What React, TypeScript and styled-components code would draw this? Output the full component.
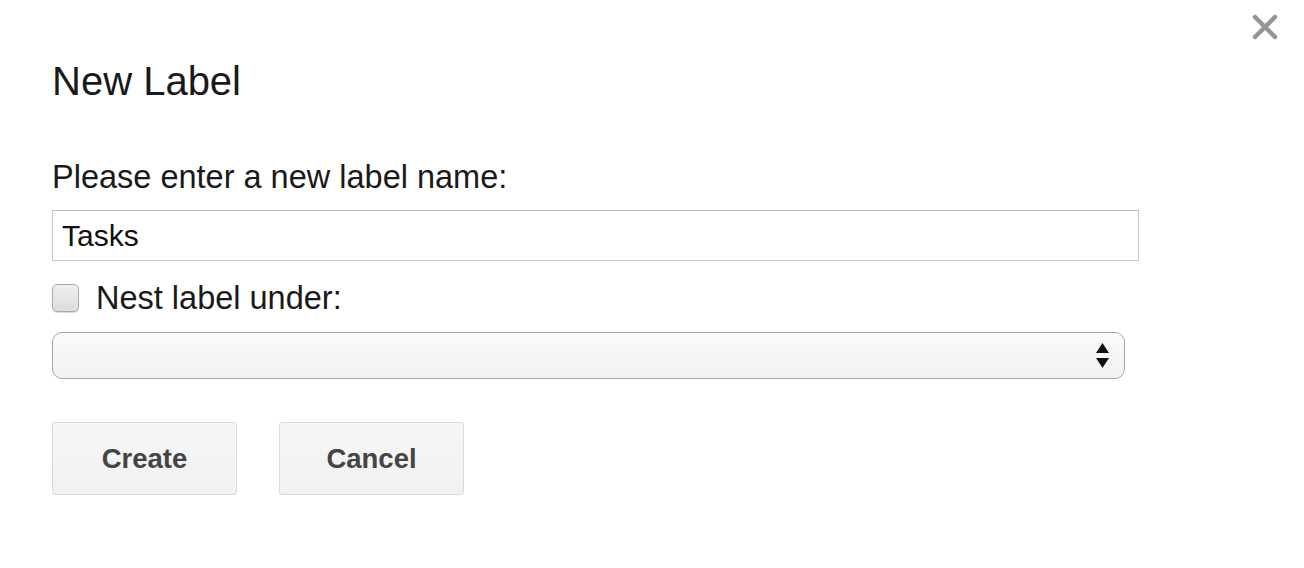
import { createGlobalStyle } from "styled-components";
import styled from "styled-components";

const GlobalStyle = createGlobalStyle`
    html, body {
        margin: 0;
        padding: 0;
        background: #ffffff;
    }
    body {
        font-family: "Liberation Sans", Arial, sans-serif;
        color: #222222;
    }
`;

function App() {
    return (
        <>
            <GlobalStyle />
            <Dialog>
                <CloseButton aria-label="Close">
                    <svg width="28" height="26" viewBox="0 0 28 26">
                        <path d="M4 3 L24 23 M24 3 L4 23" stroke="#8a8a8a" strokeWidth="4.5" strokeLinecap="round" />
                    </svg>
                </CloseButton>
                <Title>New Label</Title>
                <Prompt>Please enter a new label name:</Prompt>
                <NameInput defaultValue="Tasks" />
                <NestRow>
                    <Checkbox type="checkbox" />
                    <NestText>Nest label under:</NestText>
                </NestRow>
                <SelectBox>
                    <Arrows>
                        <svg width="13" height="26" viewBox="0 0 13 26">
                            <path d="M6.5 0 L13 10 L0 10 Z" fill="#111" />
                            <path d="M0 15 L13 15 L6.5 25 Z" fill="#111" />
                        </svg>
                    </Arrows>
                </SelectBox>
                <ButtonRow>
                    <Button>Create</Button>
                    <Button>Cancel</Button>
                </ButtonRow>
            </Dialog>
        </>
    );
}

export default App;

const Dialog = styled.div`
    position: relative;
    width: 1304px;
    height: 568px;
    box-sizing: border-box;
    padding: 61px 0 0 52px;
    display: flex;
    flex-direction: column;
    align-items: flex-start;
`;

const CloseButton = styled.button`
    position: absolute;
    top: 14px;
    left: 1251px;
    width: 28px;
    height: 26px;
    padding: 0;
    border: none;
    background: none;
    cursor: pointer;
    opacity: 0.9;
    filter: blur(0.6px);
`;

const Title = styled.h1`
    margin: 0;
    font-size: 40px;
    line-height: 40px;
    font-weight: normal;
    color: #1a1a1a;
`;

const Prompt = styled.p`
    margin: 60px 0 0;
    font-size: 32.5px;
    line-height: 33px;
    color: #1a1a1a;
`;

const NameInput = styled.input`
    margin-top: 16px;
    width: 1087px;
    height: 51px;
    box-sizing: border-box;
    border: 1px solid #c8c8c8;
    border-top-color: #b8b8b8;
    padding: 0 9px;
    font-family: "Liberation Sans", Arial, sans-serif;
    font-size: 30px;
    color: #111;
    outline: none;
`;

const NestRow = styled.label`
    margin-top: 22px;
    display: flex;
    align-items: center;
    gap: 17px;
    height: 30px;
`;

const Checkbox = styled.input`
    appearance: none;
    margin: 0;
    width: 27px;
    height: 28px;
    box-sizing: border-box;
    border: 1px solid #a9a9a9;
    border-radius: 5px;
    background: linear-gradient(#f0f0f0, #dcdcdc);
    box-shadow: 0 1px 1px rgba(0, 0, 0, 0.15);
`;

const NestText = styled.span`
    font-size: 32.5px;
    line-height: 33px;
    color: #1a1a1a;
`;

const SelectBox = styled.div`
    margin-top: 19px;
    width: 1073px;
    height: 47px;
    box-sizing: border-box;
    border: 1px solid #a6a6a6;
    border-radius: 10px;
    background: linear-gradient(#fbfbfb, #f1f1f1);
    display: flex;
    align-items: center;
    justify-content: flex-end;
    padding-right: 15px;
`;

const Arrows = styled.div`
    display: flex;
    align-items: center;
    height: 26px;
`;

const ButtonRow = styled.div`
    margin-top: 43px;
    display: flex;
    gap: 42px;
`;

const Button = styled.button`
    width: 185px;
    height: 73px;
    box-sizing: border-box;
    border: 1px solid #dadada;
    border-radius: 3px;
    background: linear-gradient(#f6f6f6, #f1f1f1);
    font-family: "Liberation Sans", Arial, sans-serif;
    font-size: 27.5px;
    font-weight: bold;
    color: #444444;
    cursor: pointer;
`;
